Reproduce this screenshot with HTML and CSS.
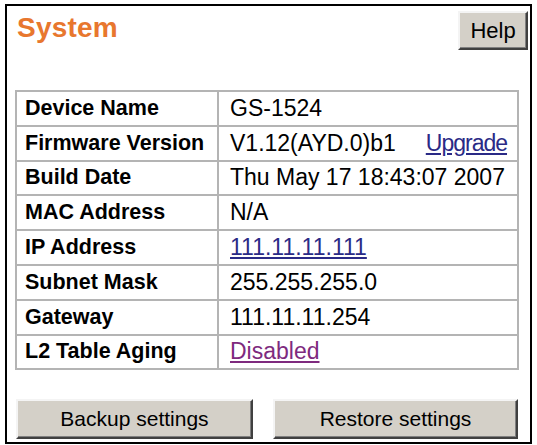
FILE: index.html
```html
<!DOCTYPE html>
<html>
<head>
<meta charset="utf-8">
<title>System</title>
<link rel="stylesheet" href="styles.css">
</head>
<body>
<div class="frame">
  <div class="header">
    <h1 class="title">System</h1>
    <button class="btn btn-help">Help</button>
  </div>
  <table class="info">
    <tr><th>Device Name</th><td>GS-1524</td></tr>
    <tr><th>Firmware Version</th><td>V1.12(AYD.0)b1<a class="link upgrade" href="#">Upgrade</a></td></tr>
    <tr><th>Build Date</th><td>Thu May 17 18:43:07 2007</td></tr>
    <tr><th>MAC Address</th><td>N/A</td></tr>
    <tr><th>IP Address</th><td><a class="link" href="#">111.11.11.111</a></td></tr>
    <tr><th>Subnet Mask</th><td>255.255.255.0</td></tr>
    <tr><th>Gateway</th><td>111.11.11.254</td></tr>
    <tr><th>L2 Table Aging</th><td><a class="link visited" href="#">Disabled</a></td></tr>
  </table>
  <div class="actions">
    <button class="btn btn-backup">Backup settings</button>
    <button class="btn btn-restore">Restore settings</button>
  </div>
</div>
</body>
</html>
```
FILE: styles.css
```css
html, body {
  margin: 0;
  padding: 0;
  background: #ffffff;
  overflow: hidden;
}
body {
  font-family: "Liberation Sans", Arial, sans-serif;
  color: #000;
}
.frame {
  box-sizing: border-box;
  margin: 4px 0 0 5px;
  width: 527px;
  height: 440px;
  border: 2px solid #000;
  display: flex;
  flex-direction: column;
}
.header {
  height: 84px;
  flex: none;
  display: flex;
  justify-content: space-between;
  align-items: flex-start;
  padding: 0 2px 0 10px;
  box-sizing: border-box;
}
.title {
  margin: 7px 0 0 0;
  font-size: 28px;
  font-weight: bold;
  letter-spacing: 0.2px;
  line-height: 30px;
  color: #e8772e;
}
.btn {
  font-family: "Liberation Sans", Arial, sans-serif;
  font-size: 21px;
  color: #000;
  background: #d4d0c8;
  border-style: solid;
  border-width: 2px;
  border-color: #f4f4f4 #404040 #404040 #f4f4f4;
  box-shadow: inset -1px -1px 0 #808080;
  padding: 0;
  box-sizing: border-box;
}
.btn-help {
  margin-top: 5px;
  width: 70px;
  height: 39px;
  font-size: 22px;
}
.info {
  margin-left: 8px;
  width: 504px;
  border-collapse: collapse;
  border: 2px solid #9c9c9c;
  font-size: 23px;
  flex: none;
}
.info th, .info td {
  border: 2px solid #b4b4b4;
  height: 32.8px;
  padding: 0 0 0 8px;
  text-align: left;
  vertical-align: middle;
  white-space: nowrap;
}
.info th {
  width: 192px;
  font-weight: bold;
  font-size: 21.5px;
}
.info td {
  padding-left: 11px;
}
.link {
  color: #2a2a86;
  text-decoration: underline;
}
.link.visited {
  color: #7e2a7e;
}
.upgrade {
  margin-left: 30px;
  letter-spacing: -1px;
}
.actions {
  display: flex;
  gap: 20px;
  margin-top: 29px;
  padding-left: 9px;
}
.btn-backup {
  width: 237px;
  height: 40px;
}
.btn-restore {
  width: 245px;
  height: 40px;
}
```
